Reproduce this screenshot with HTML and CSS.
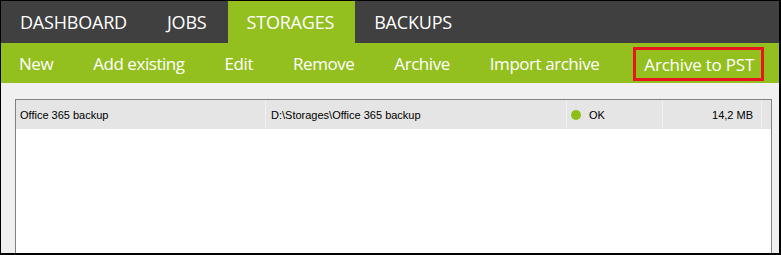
FILE: index.html
```html
<!DOCTYPE html>
<html>
<head>
  <title>Storages</title>
  <link rel="stylesheet" href="styles.css">
</head>
<body>
  <div class="window">
    <div class="tabs">
      <div class="tab">DASHBOARD</div>
      <div class="tab">JOBS</div>
      <div class="tab active">STORAGES</div>
      <div class="tab">BACKUPS</div>
    </div>
    <div class="toolbar">
      <div class="tool">New</div>
      <div class="tool">Add existing</div>
      <div class="tool">Edit</div>
      <div class="tool">Remove</div>
      <div class="tool">Archive</div>
      <div class="tool">Import archive</div>
      <div class="tool marked">Archive to PST</div>
    </div>
    <div class="content">
      <div class="list">
        <div class="row">
          <div class="cell name">Office 365 backup</div>
          <div class="cell path">D:\Storages\Office 365 backup</div>
          <div class="cell status"><span class="dot"></span>OK</div>
          <div class="cell size">14,2 MB</div>
          <div class="cell filler"></div>
        </div>
      </div>
    </div>
  </div>
</body>
</html>
```

FILE: styles.css
```css
body {
  margin: 0;
  font-family: "Open Sans", "Noto Sans", sans-serif;
  background-color: #fff;
}

.window {
  width: 778px;
  height: 252px;
  border-top: 1px solid #000;
  border-left: 1px solid #000;
  border-right: 2px solid #000;
  border-bottom: 2px solid #000;
  background-color: #f0f0f0;
  display: flex;
  flex-direction: column;
  overflow: hidden;
}

.tabs {
  display: flex;
  flex-shrink: 0;
  height: 42px;
  background-color: #404040;
}

.tab {
  display: flex;
  align-items: center;
  padding: 0 21px 0 19px;
  color: #fff;
  font-size: 18px;
  letter-spacing: -0.2px;
  white-space: nowrap;
}

.tab.active {
  background-color: #93bf1f;
}

.toolbar {
  display: flex;
  flex-shrink: 0;
  align-items: center;
  gap: 40px;
  height: 40px;
  padding-left: 18px;
  background-color: #93bf1f;
}

.tool {
  flex-shrink: 0;
  color: #fff;
  font-size: 17px;
  letter-spacing: -0.45px;
  white-space: nowrap;
}

.tool.marked {
  display: flex;
  align-items: center;
  height: 28px;
  margin-left: -6px;
  margin-top: 2px;
  padding: 0 7px 0 8px;
  border: 3px solid #e8161e;
  letter-spacing: -0.2px;
}

.content {
  flex: 1;
  padding: 16px 7px 0 14px;
}

.list {
  height: 100%;
  border: 1px solid #828282;
  border-bottom: none;
  background-color: #fff;
}

.row {
  display: flex;
  height: 29px;
  background-color: #e5e5e5;
  font-family: "Liberation Sans", Arial, sans-serif;
  font-size: 11px;
  color: #000;
}

.cell {
  display: flex;
  align-items: center;
  padding: 0 4px;
  border-right: 1px solid #f2f2f2;
}

.name {
  width: 241px;
}

.path {
  width: 291px;
  padding-left: 5px;
}

.status {
  width: 87px;
  padding-left: 4px;
}

.dot {
  width: 10px;
  height: 10px;
  margin-right: 8px;
  border-radius: 50%;
  background-color: #8fc01a;
}

.size {
  width: 86px;
  justify-content: flex-end;
  padding-right: 8px;
}

.filler {
  flex: 1;
  border-right: none;
  padding: 0;
}
```
